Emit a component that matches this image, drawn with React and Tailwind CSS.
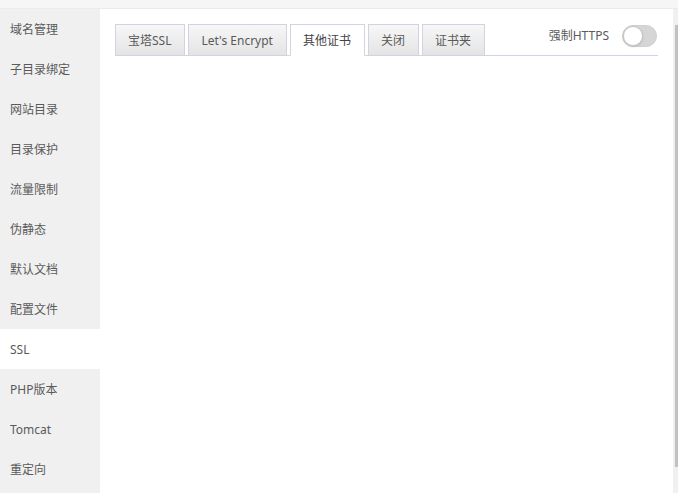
import React from 'react';

const menu = ['域名管理', '子目录绑定', '网站目录', '目录保护', '流量限制', '伪静态', '默认文档', '配置文件', 'SSL', 'PHP版本', 'Tomcat', '重定向'];
const tabs = ['宝塔SSL', "Let's Encrypt", '其他证书', '关闭', '证书夹'];

const App = () => {
    const activeMenu = 'SSL';
    const activeTab = '其他证书';

    return (
        <div className="w-[678px] h-[493px] flex flex-col overflow-hidden bg-white text-[12px] text-[#5a5a5a] font-['Noto_Sans','Noto_Sans_CJK_SC',sans-serif]">
            {/* 顶部条 */}
            <div className="h-[9px] shrink-0 bg-[#f6f6f6] border-b border-[#ebebeb]" />

            <div className="flex flex-1 min-h-0">
                {/* 左侧菜单 */}
                <aside className="w-[100px] shrink-0 bg-[#f0f0f0]">
                    {menu.map((item) => (
                        <div
                            key={item}
                            className={`h-10 flex items-center pl-[10px] pt-[2px] ${item === activeMenu ? 'bg-white' : ''}`}
                        >
                            {item}
                        </div>
                    ))}
                </aside>

                {/* 内容 */}
                <main className="flex-1 bg-white px-[15px] pt-[15px]">
                    <div className="flex items-end border-b border-[#d4d2e2]">
                        {tabs.map((tab) => (
                            <div
                                key={tab}
                                className={`h-[32px] -mb-px mr-[3px] pl-[12px] pr-[13px] pt-px flex items-center border border-[#d4d2e2] whitespace-nowrap ${
                                    tab === activeTab
                                        ? 'bg-white border-b-white text-[#444]'
                                        : 'bg-gradient-to-b from-[#f7f7f7] to-[#e4e4e4]'
                                }`}
                            >
                                {tab}
                            </div>
                        ))}

                        {/* 强制HTTPS */}
                        <div className="ml-auto mr-px self-start h-[24px] flex items-center gap-[13px]">
                            <span>强制HTTPS</span>
                            <div className="w-[35px] h-[22px] rounded-full bg-[#d6d6d6] border border-[#d0d0d0] flex items-center">
                                <div className="w-[20px] h-[20px] rounded-full bg-white border border-[#c8c8c8] shadow-sm" />
                            </div>
                        </div>
                    </div>
                </main>

                {/* 滚动条 */}
                <div className="w-[5px] shrink-0 bg-[#f0f0f0] pt-[16px] flex justify-end">
                    <div className="w-[3px] h-[442px] bg-[#c1c1c1]" />
                </div>
            </div>
        </div>
    );
};

export default App;
